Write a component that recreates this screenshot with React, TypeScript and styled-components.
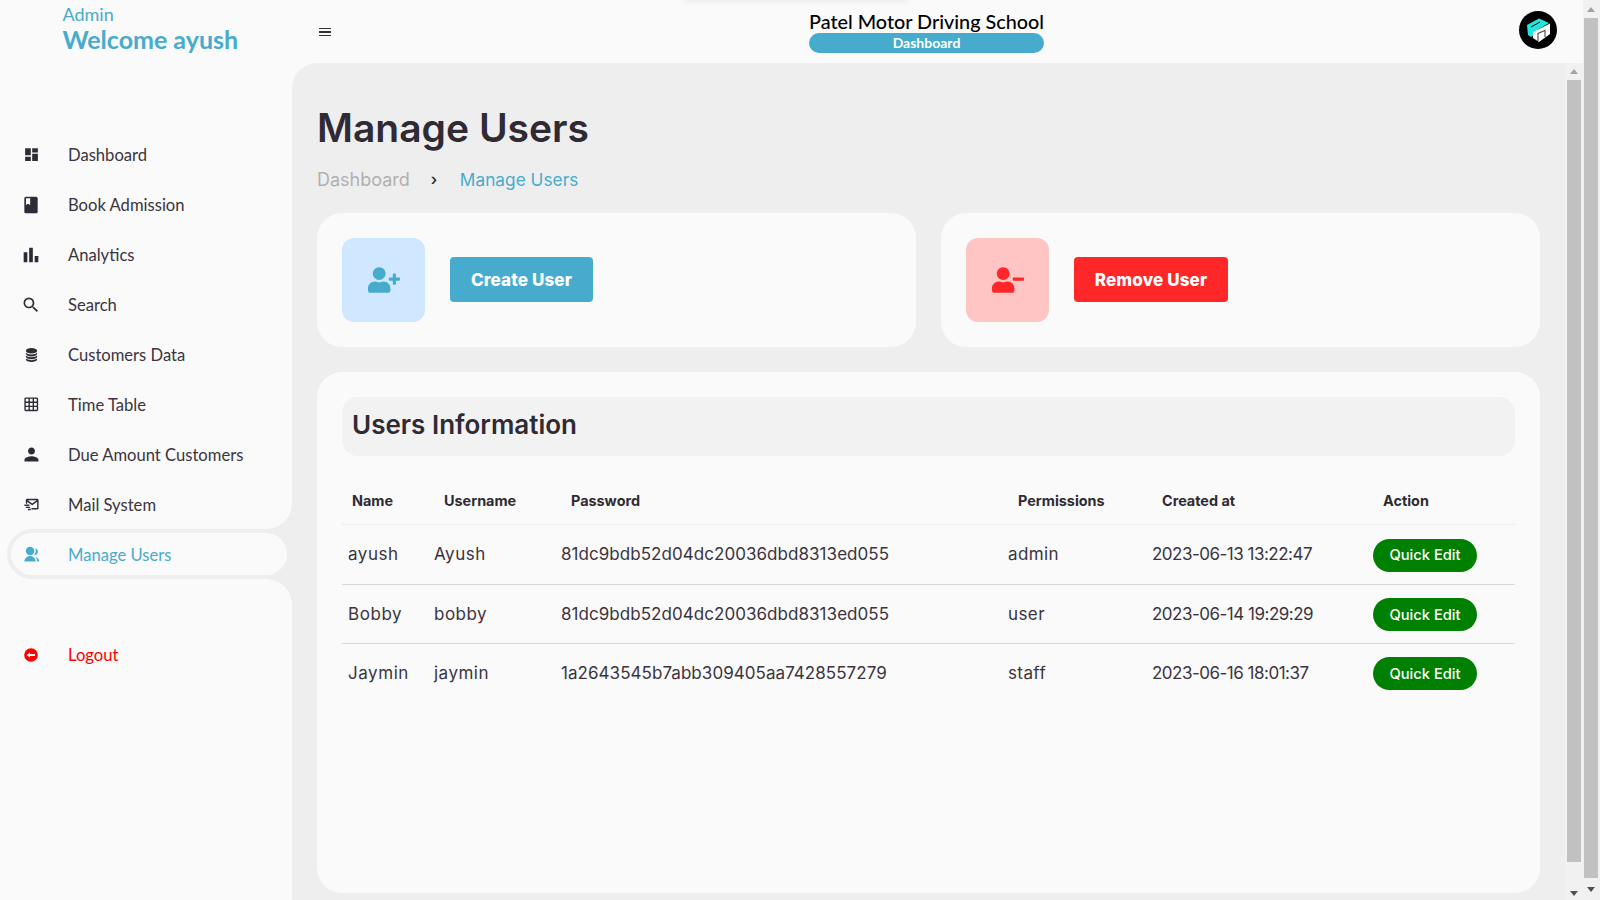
import React from "react";
import styled, { createGlobalStyle } from "styled-components";
import { MdDashboard, MdBook, MdBarChart, MdSearch, MdPerson, MdOutlineGridOn } from "react-icons/md";
import { BsDatabaseFill } from "react-icons/bs";
import { BiMailSend } from "react-icons/bi";
import { RiGroupFill } from "react-icons/ri";
import { FaUserPlus, FaUserMinus } from "react-icons/fa";

const ACCENT = "#47abce";
const INK = "#3a3440";
const SIDE = '"Lato", "Liberation Sans", sans-serif';
const BODY = '"Inter", "Liberation Sans", sans-serif';

const Global = createGlobalStyle`
  html, body { margin: 0; padding: 0; height: 100%; overflow: hidden; background: #fafafa; }
  #root { height: 100%; }
  * { box-sizing: border-box; }
`;

const Page = styled.div`
  position: relative;
  display: flex;
  width: 1600px;
  height: 900px;
  overflow: hidden;
  background: #fafafa;
`;

const Shell = styled.div`
  flex: 1;
  display: grid;
  grid-template-columns: 292px 1fr;
  min-width: 0;
`;

const Sidebar = styled.aside`
  display: flex;
  flex-direction: column;
  background: #fafafa;
`;

const Brand = styled.div`
  height: 129px;
  padding: 3px 0 0 62.5px;
  font-family: ${SIDE};
  color: ${ACCENT};
`;

const BrandRole = styled.div`
  font-size: 18px;
  line-height: 22px;
`;

const BrandName = styled.div`
  font-size: 25px;
  line-height: 29px;
  font-weight: 700;
`;

const Menu = styled.nav`
  display: flex;
  flex-direction: column;
`;

const MenuRow = styled.div<{ $danger?: boolean }>`
  display: flex;
  align-items: center;
  height: 50px;
  padding: 1px 0 0 24px;
  margin-top: ${(p) => (p.$danger ? "50px" : "0")};
  font-family: ${SIDE};
  font-size: 16.6px;
  color: ${(p) => (p.$danger ? "#ff0000" : INK)};
`;

const ActiveRow = styled.div`
  position: relative;
  height: 50px;
  margin-left: 7px;
  padding: 4px 5px 4px 4px;
  background: #eeeeee;
  border-radius: 25px 0 0 25px;

  &::before,
  &::after {
    content: "";
    position: absolute;
    right: 0;
    width: 25px;
    height: 25px;
  }
  &::before {
    top: -25px;
    background: radial-gradient(circle at 0 0, #fafafa 24.5px, #eeeeee 25px);
  }
  &::after {
    bottom: -25px;
    background: radial-gradient(circle at 0 100%, #fafafa 24.5px, #eeeeee 25px);
  }
`;

const ActivePill = styled.div`
  display: flex;
  align-items: center;
  height: 42px;
  padding: 1px 0 0 13px;
  background: #fafafa;
  border-radius: 21px;
  font-family: ${SIDE};
  font-size: 16.6px;
  color: ${ACCENT};
`;

const MenuIcon = styled.span<{ $size?: number; $dark?: boolean }>`
  display: inline-flex;
  align-items: center;
  justify-content: center;
  flex: 0 0 14px;
  width: 14px;
  height: 16px;
  margin-right: 30px;
  font-size: ${(p) => p.$size ?? 17}px;
  color: ${(p) => (p.$dark ? "#2f2a36" : "inherit")};
  svg {
    flex: none;
  }
`;

const Right = styled.div`
  display: flex;
  flex-direction: column;
  min-width: 0;
`;

const TopBar = styled.header`
  position: relative;
  display: grid;
  grid-template-columns: 1fr auto 1fr;
  align-items: center;
  height: 63px;
  flex: none;
  padding: 0 26px 0 27px;
`;

const Hamburger = styled.div`
  display: flex;
  flex-direction: column;
  gap: 2.2px;
  width: 12px;
  margin-top: 1px;
  span {
    display: block;
    height: 1.5px;
    background: #333;
  }
`;

const TitleBlock = styled.div`
  display: flex;
  flex-direction: column;
  width: 235px;
  margin: -2px 0 0 -23px;
  font-family: ${SIDE};
`;

const SchoolName = styled.div`
  font-size: 19.8px;
  line-height: 24px;
  font-weight: 500;
  color: #000;
  text-align: center;
  white-space: nowrap;
`;

const SectionPill = styled.div`
  height: 20px;
  line-height: 20px;
  border-radius: 10px;
  background: ${ACCENT};
  color: #fff;
  font-size: 14px;
  font-weight: 700;
  text-align: center;
`;

const Avatar = styled.svg`
  justify-self: end;
  width: 38px;
  height: 38px;
  margin-top: -4px;
  display: block;
`;

const TopGlow = styled.div`
  position: absolute;
  top: -6px;
  left: 392px;
  width: 224px;
  height: 6px;
  border-radius: 4px;
  box-shadow: 0 1px 6px rgba(0, 0, 0, 0.08);
`;

const Main = styled.main`
  flex: 1;
  display: flex;
  min-height: 0;
  background: #eeeeee;
  border-top-left-radius: 25px;
`;

const Content = styled.div`
  flex: 1;
  display: flex;
  flex-direction: column;
  min-width: 0;
  padding: 40px 25px 7px 25px;
`;

const Heading = styled.h1`
  margin: 0 0 14px;
  font-family: ${BODY};
  font-size: 39px;
  line-height: 50px;
  font-weight: 600;
  color: #2f2a33;
`;

const Crumbs = styled.div`
  display: flex;
  align-items: center;
  height: 24px;
  margin-bottom: 22px;
  font-family: ${BODY};
  font-size: 18px;
  color: #b0b0b0;
`;

const CrumbSep = styled.span`
  display: inline-flex;
  width: 50px;
  padding-left: 21px;
  color: #222;
  font-size: 16px;
  font-weight: 500;
`;

const CrumbCurrent = styled.span`
  color: ${ACCENT};
  font-size: 17.3px;
`;

const ActionGrid = styled.div`
  display: grid;
  grid-template-columns: 1fr 1fr;
  gap: 25px;
  margin-bottom: 25px;
`;

const ActionCard = styled.section`
  display: flex;
  align-items: center;
  gap: 25px;
  height: 134px;
  padding: 0 25px;
  background: #fafafa;
  border-radius: 25px;
`;

const IconTile = styled.div<{ $bg: string; $fg: string }>`
  display: flex;
  align-items: center;
  justify-content: center;
  width: 83px;
  height: 84px;
  border-radius: 12px;
  background: ${(p) => p.$bg};
  color: ${(p) => p.$fg};
  font-size: 32px;
`;

const ActionButton = styled.button<{ $bg: string; $w: number }>`
  width: ${(p) => p.$w}px;
  height: 45px;
  margin-bottom: 1px;
  border: 0;
  border-radius: 4px;
  background: ${(p) => p.$bg};
  color: #fff;
  font-family: ${BODY};
  font-size: 17px;
  font-weight: 800;
  letter-spacing: 0.15px;
`;

const TableCard = styled.section`
  flex: 1;
  min-height: 0;
  padding: 25px;
  background: #fafafa;
  border-radius: 25px;
`;

const TableTitle = styled.h2`
  margin: 0 0 24px;
  height: 59px;
  padding-left: 10px;
  background: #f2f2f2;
  border-radius: 16px;
  font-family: ${BODY};
  font-size: 26px;
  line-height: 56px;
  font-weight: 600;
  color: #2f2a33;
`;

const Table = styled.table`
  width: 100%;
  table-layout: fixed;
  border-collapse: collapse;
  font-family: ${BODY};
`;

const HeadCell = styled.th`
  height: 44px;
  padding: 0 0 2px 10px;
  text-align: left;
  font-size: 14.4px;
  font-weight: 700;
  color: #2f2a33;
  border-bottom: 1px solid #eeeeee;
`;

const Row = styled.tr`
  &:not(:last-child) td {
    border-bottom: 1px solid #d8d8d8;
  }
  &:first-child td {
    height: 60px;
  }
`;

const Cell = styled.td<{ $track?: number }>`
  height: 59px;
  padding: 0;
  font-size: 17px;
  letter-spacing: ${(p) => p.$track ?? 0}px;
  color: ${INK};
  white-space: nowrap;
`;

const NameCell = styled(Cell)`
  padding-left: 6px;
`;

const QuickEdit = styled.button`
  width: 104px;
  height: 33px;
  border: 0;
  border-radius: 17px;
  background: #008000;
  color: #fff;
  font-family: ${BODY};
  font-size: 14.7px;
  font-weight: 500;
  margin-top: 2px;
`;

const Scroll = styled.div<{ $w: number; $l: number; $r: number }>`
  display: flex;
  flex-direction: column;
  align-items: stretch;
  flex: 0 0 ${(p) => p.$w}px;
  height: 100%;
  padding: 0 ${(p) => p.$r}px 0 ${(p) => p.$l}px;
  background: #f1f1f1;
`;

const ArrowBox = styled.div<{ $h: number; $end?: boolean }>`
  display: flex;
  justify-content: center;
  align-items: ${(p) => (p.$end ? "flex-end" : "center")};
  flex: ${(p) => (p.$h ? `0 0 ${p.$h}px` : "1")};
  padding-bottom: ${(p) => (p.$end ? "4px" : "0")};
`;

const ArrowUp = styled.i`
  width: 0;
  height: 0;
  border-left: 4.5px solid transparent;
  border-right: 4.5px solid transparent;
  border-bottom: 5px solid #a3a3a3;
`;

const ArrowDown = styled.i`
  width: 0;
  height: 0;
  border-left: 4.5px solid transparent;
  border-right: 4.5px solid transparent;
  border-top: 5px solid #505050;
`;

const Thumb = styled.div<{ $h: number }>`
  flex: 0 0 ${(p) => p.$h}px;
  background: #c1c1c1;
`;

const LogoutGlyph = () => (
  <svg width="14" height="14" viewBox="0 0 14 14">
    <circle cx="7" cy="7" r="6.8" fill="#ff0000" />
    <path d="M2.6 7 L6 4.4 V6 H11 V8 H6 V9.6 Z" fill="#fff" />
  </svg>
);

const items = [
  ["Dashboard", MdDashboard, 17],
  ["Book Admission", MdBook, 20],
  ["Analytics", MdBarChart, 22],
  ["Search", MdSearch, 20],
  ["Customers Data", BsDatabaseFill, 15],
  ["Time Table", MdOutlineGridOn, 16.5],
  ["Due Amount Customers", MdPerson, 21],
  ["Mail System", BiMailSend, 17],
] as const;

const users = [
  ["ayush", "Ayush", "81dc9bdb52d04dc20036dbd8313ed055", "admin", "2023-06-13 13:22:47"],
  ["Bobby", "bobby", "81dc9bdb52d04dc20036dbd8313ed055", "user", "2023-06-14 19:29:29"],
  ["Jaymin", "jaymin", "1a2643545b7abb309405aa7428557279", "staff", "2023-06-16 18:01:37"],
];

const colWidths = [92, 127, 447, 144, 221, 142];

export default function App() {
  return (
    <Page>
      <Global />
      <Shell>
        <Sidebar>
          <Brand>
            <BrandRole>Admin</BrandRole>
            <BrandName>Welcome ayush</BrandName>
          </Brand>
          <Menu>
            {items.map(([label, Icon, size]) => (
              <MenuRow key={label}>
                <MenuIcon $dark $size={size}>
                  <Icon />
                </MenuIcon>
                {label}
              </MenuRow>
            ))}
            <ActiveRow>
              <ActivePill>
                <MenuIcon>
                  <RiGroupFill />
                </MenuIcon>
                Manage Users
              </ActivePill>
            </ActiveRow>
            <MenuRow $danger>
              <MenuIcon>
                <LogoutGlyph />
              </MenuIcon>
              Logout
            </MenuRow>
          </Menu>
        </Sidebar>
        <Right>
          <TopBar>
            <TopGlow />
            <Hamburger>
              <span />
              <span />
              <span />
            </Hamburger>
            <TitleBlock>
              <SchoolName>Patel Motor Driving School</SchoolName>
              <SectionPill>Dashboard</SectionPill>
            </TitleBlock>
            <Avatar viewBox="0 0 38 38">
              <circle cx="19" cy="19" r="19" fill="#000" />
              <path d="M8 14 L20 7.5 L30 12 L18 19 L18 22 L12 26 L9 24 Z" fill="#22e6dc" />
              <path d="M14 27 L14 21 L31 12.5 L31 23 L20 31 Z" fill="#fff" />
              <path d="M19 30 V22.5 L26 19.5 V26" fill="none" stroke="#555" strokeWidth="1.2" />
              <path d="M12 16 L21 11" stroke="#000" strokeWidth="1" />
            </Avatar>
          </TopBar>
          <Main>
            <Content>
              <Heading>Manage Users</Heading>
              <Crumbs>
                <span>Dashboard</span>
                <CrumbSep>›</CrumbSep>
                <CrumbCurrent>Manage Users</CrumbCurrent>
              </Crumbs>
              <ActionGrid>
                <ActionCard>
                  <IconTile $bg="#cfe8ff" $fg={ACCENT}>
                    <FaUserPlus />
                  </IconTile>
                  <ActionButton $bg={ACCENT} $w={143}>Create User</ActionButton>
                </ActionCard>
                <ActionCard>
                  <IconTile $bg="#ffc4c4" $fg="#ff2727">
                    <FaUserMinus />
                  </IconTile>
                  <ActionButton $bg="#ff2727" $w={154}>Remove User</ActionButton>
                </ActionCard>
              </ActionGrid>
              <TableCard>
                <TableTitle>Users Information</TableTitle>
                <Table>
                  <colgroup>
                    {colWidths.map((w, i) => (
                      <col key={i} width={w} />
                    ))}
                  </colgroup>
                  <thead>
                    <tr>
                      {["Name", "Username", "Password", "Permissions", "Created at", "Action"].map((h) => (
                        <HeadCell key={h}>{h}</HeadCell>
                      ))}
                    </tr>
                  </thead>
                  <tbody>
                    {users.map((u) => (
                      <Row key={u[0]}>
                        <NameCell $track={0.55}>{u[0]}</NameCell>
                        <Cell $track={0.5}>{u[1]}</Cell>
                        <Cell $track={0.05}>{u[2]}</Cell>
                        <Cell $track={0.4}>{u[3]}</Cell>
                        <Cell $track={-0.5}>{u[4]}</Cell>
                        <Cell>
                          <QuickEdit>Quick Edit</QuickEdit>
                        </Cell>
                      </Row>
                    ))}
                  </tbody>
                </Table>
              </TableCard>
            </Content>
            <Scroll $w={18} $l={2} $r={2}>
              <ArrowBox $h={17}>
                <ArrowUp />
              </ArrowBox>
              <Thumb $h={782} />
              <ArrowBox $h={0} $end>
                <ArrowDown />
              </ArrowBox>
            </Scroll>
          </Main>
        </Right>
      </Shell>
      <Scroll $w={17} $l={1} $r={2}>
        <ArrowBox $h={18}>
          <ArrowUp />
        </ArrowBox>
        <Thumb $h={860} />
        <ArrowBox $h={22}>
          <ArrowDown />
        </ArrowBox>
      </Scroll>
    </Page>
  );
}
